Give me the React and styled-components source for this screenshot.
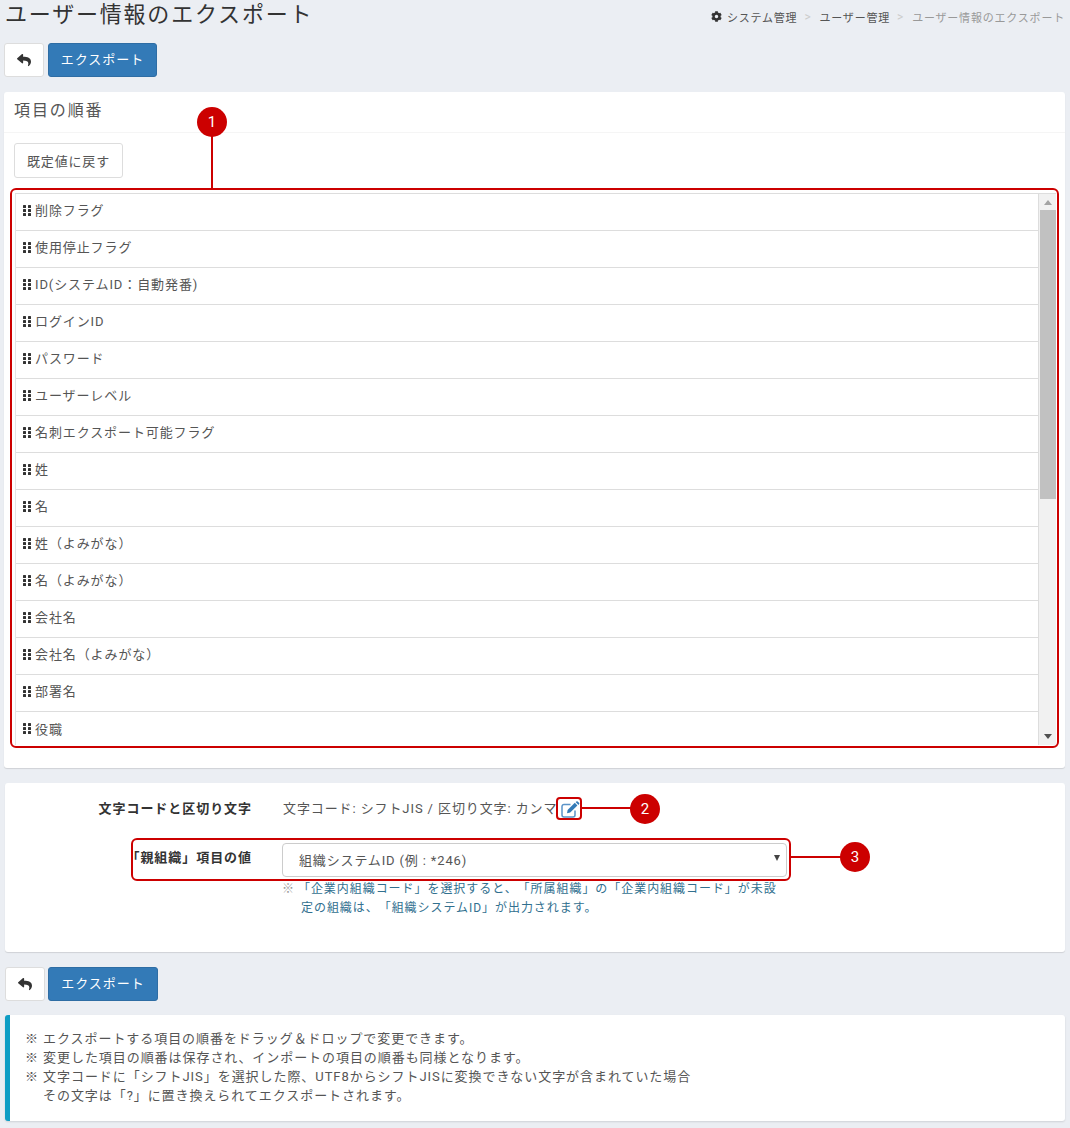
import React from "react";
import styled, { createGlobalStyle } from "styled-components";
import { FaCog, FaReply } from "react-icons/fa";

const Global = createGlobalStyle`
  html, body { margin: 0; padding: 0; background: #ebeef3; }
  body {
    font-family: Roboto, "Noto Sans CJK JP", sans-serif;
    font-size: 13px;
    color: #555;
    height: 1128px;
    overflow: hidden;
    text-spacing-trim: space-all;
  }
  * { box-sizing: border-box; }
`;

const Page = styled.div`
  padding: 0 5px 0 4px;
  width: 1070px;
`;
const TitleBar = styled.header`
  display: flex;
  justify-content: space-between;
  align-items: flex-start;
  height: 43px;
  padding-left: 1px;
`;
const Title = styled.h1`
  margin: 0;
  font-size: 22px;
  line-height: 29px;
  font-weight: 400;
  letter-spacing: 1.8px;
  color: #333;
`;
const Crumbs = styled.nav`
  display: flex;
  align-items: center;
  height: 17px;
  margin-top: 8px;
  font-size: 11px;
  letter-spacing: 0.8px;
  color: #555;
`;
const CrumbIcon = styled(FaCog)`
  font-size: 11px;
  margin-right: 5px;
  color: #333;
`;
const Sep = styled.span`
  color: #ccc;
  font-size: 12px;
  margin: 0 8px 0 7px;
`;
const CrumbCurrent = styled.span`
  color: #999;
`;
const Actions = styled.div`
  display: flex;
  gap: ${(p) => p.$gap || 4}px;
  height: 34px;
  margin-left: ${(p) => p.$left || 0}px;
`;
const BackButton = styled.button`
  width: 40px;
  height: 34px;
  padding: 0;
  background: #fff;
  border: 1px solid #ddd;
  border-radius: 3px;
  color: #333;
  font-size: 14px;
  display: flex;
  align-items: center;
  justify-content: center;
`;
const PrimaryButton = styled.button`
  width: ${(p) => p.$width || 109}px;
  height: 34px;
  padding: 0 0 4px;
  background: #337ab7;
  border: 1px solid #2e6da4;
  border-radius: 3px;
  color: #fff;
  font-family: inherit;
  font-size: 13px;
  letter-spacing: 0.95px;
`;
const Panel = styled.section`
  background: #fff;
  border-radius: 3px;
  box-shadow: 0 1px 1px rgba(0, 0, 0, 0.12);
  margin-top: ${(p) => p.$top}px;
  margin-left: ${(p) => p.$left || 0}px;
`;
const PanelHead = styled.div`
  height: 41px;
  padding: 8px 10px 0;
  font-size: 16px;
  line-height: 21px;
  letter-spacing: 1.9px;
  color: #555;
  border-bottom: 1px solid #f5f5f5;
`;
const PanelBody = styled.div`
  padding: 10px 6px 20px 7px;
  height: 635px;
`;
const ResetButton = styled.button`
  display: block;
  margin-left: 3px;
  width: 109px;
  height: 35px;
  padding: 0;
  background: #fff;
  border: 1px solid #ddd;
  border-radius: 3px;
  color: #555;
  font-family: inherit;
  font-size: 13px;
  letter-spacing: 0.85px;
`;
const ListFrame = styled.div`
  position: relative;
  margin: 15px 0 0 4px;
  width: 1041px;
  height: 552px;
  display: flex;
  border-top: 1px solid #ddd;
`;
const Rows = styled.ul`
  flex: 1;
  list-style: none;
  margin: 0;
  padding: 0;
  overflow: hidden;
  border-left: 1px solid #e4e4e4;
  border-right: 1px solid #ddd;
`;
const Row = styled.li`
  display: flex;
  align-items: center;
  height: 37px;
  padding: 0 0 5px 7px;
  gap: 4px;
  font-size: 13px;
  letter-spacing: 0.9px;
  color: #555;
  border-bottom: 1px solid #ddd;
  &:last-child { border-bottom: 0; }
`;
const GripIcon = styled.svg`
  margin-top: 1px;
  flex: none;
`;
const Scrollbar = styled.div`
  width: 17px;
  background: #f1f1f1;
  display: flex;
  flex-direction: column;
  align-items: stretch;
`;
const ScrollArrow = styled.div`
  height: 17px;
  display: flex;
  align-items: center;
  justify-content: center;
`;
const ScrollTrack = styled.div`
  flex: 1;
  padding: 0 0 0 1px;
  margin-top: -1px;
`;
const ScrollThumb = styled.div`
  height: 289px;
  background: #c1c1c1;
`;
const Mark = styled.div`
  position: absolute;
  border: 2px solid #cc0000;
  border-radius: ${(p) => p.$radius || 6}px;
  pointer-events: none;
`;
const ListMark = styled(Mark)`
  left: -5px;
  top: -6px;
  width: 1049px;
  height: 560px;
`;
const Badge = styled.div`
  position: absolute;
  width: 30px;
  height: 30px;
  border-radius: 50%;
  background: #cc0000;
  color: #fff;
  font-size: 15px;
  font-family: Roboto, sans-serif;
  display: flex;
  align-items: center;
  justify-content: center;
`;
const Badge1 = styled(Badge)`
  left: 182px;
  top: -87px;
`;
const VLine = styled.div`
  position: absolute;
  left: 196px;
  top: -60px;
  width: 2px;
  height: 54px;
  background: #cc0000;
`;
const HLine = styled.div`
  position: absolute;
  height: 2px;
  background: #cc0000;
  width: ${(p) => p.$width}px;
  left: ${(p) => p.$left}px;
  top: ${(p) => p.$top}px;
`;
const FormBody = styled.div`
  height: 169px;
  padding-top: 16px;
`;
const FormRow = styled.div`
  position: relative;
  display: grid;
  grid-template-columns: 247px 505px;
  column-gap: 30px;
  margin-top: ${(p) => p.$top || 0}px;
`;
const Label = styled.label`
  text-align: right;
  font-size: 13px;
  font-weight: 700;
  line-height: 20px;
  padding-top: ${(p) => p.$pad || 0}px;
  letter-spacing: 0.95px;
  color: #333;
`;
const Value = styled.div`
  display: flex;
  align-items: center;
  padding-left: 1px;
  font-size: 13px;
  line-height: 20px;
  letter-spacing: 0.9px;
  color: #555;
  white-space: nowrap;
`;
const EditIcon = styled.svg`
  margin-left: 4px;
  flex: none;
`;
const IconMark = styled(Mark)`
  left: 551px;
  top: -2px;
  width: 26px;
  height: 23px;
  border-radius: 4px;
`;
const Badge2 = styled(Badge)`
  left: 625px;
  top: -5px;
`;
const SelectWrap = styled.div`
  position: relative;
`;
const Select = styled.select`
  appearance: none;
  display: block;
  width: 505px;
  height: 34px;
  padding: 1px 0 0 16px;
  background: #fff;
  border: 1px solid #ccc;
  border-radius: 4px;
  font-family: inherit;
  font-size: 13px;
  letter-spacing: 0.85px;
  color: #555;
`;
const Caret = styled.svg`
  position: absolute;
  right: 7px;
  top: 12px;
`;
const SelectMark = styled(Mark)`
  left: 126px;
  top: -5px;
  width: 660px;
  height: 43px;
`;
const Badge3 = styled(Badge)`
  left: 835px;
  top: -1px;
`;
const Hint = styled.p`
  grid-column: 2;
  margin: 3px 0 0;
  width: 505px;
  padding-left: 19px;
  text-indent: -19px;
  font-size: 12px;
  line-height: 19px;
  letter-spacing: 0.95px;
  color: #31708f;
`;
const HintMark = styled.span`
  color: #999;
  margin-right: 3px;
`;
const Info = styled.aside`
  margin: 14px 0 0 1px;
  height: 106px;
  padding: 14px 20px 0 15px;
  background: #fff;
  border-left: 5px solid #0e9dc4;
  border-radius: 3px;
  box-shadow: 0 1px 2px rgba(0, 0, 0, 0.12);
  font-size: 13px;
  line-height: 19px;
  letter-spacing: 0.94px;
  color: #555;
`;
const InfoLine = styled.div`
  padding-left: ${(p) => (p.$indent ? 18 : 0)}px;
`;
const Spacer = styled.div`
  height: 15px;
`;

function Grip() {
  return (
    <GripIcon width="8" height="11" viewBox="0 0 8 11" fill="#333">
      {[0, 4, 8].map((y) => (
        <g key={y}>
          <rect x="0" y={y} width="3" height="3" rx="0.5" />
          <rect x="5" y={y} width="3" height="3" rx="0.5" />
        </g>
      ))}
    </GripIcon>
  );
}

function PencilSquare() {
  return (
    <EditIcon width="19" height="17" viewBox="0 0 19 17">
      <path
        d="M9.5 3.5H3a2 2 0 0 0-2 2v8.5a2 2 0 0 0 2 2h9a2 2 0 0 0 2-2V9.5"
        fill="none"
        stroke="#5a93c8"
        strokeWidth="1.5"
      />
      <path d="M6 12.2l.6-3.2L13.8 1.8l2.6 2.6L9.2 11.6z" fill="#337ab7" />
      <path d="M14.6 1l.8-.6a1 1 0 0 1 1.3.1l1.3 1.3a1 1 0 0 1 .1 1.3l-.7.8z" fill="#337ab7" />
    </EditIcon>
  );
}

const items = [
  "削除フラグ", "使用停止フラグ", "ID(システムID：自動発番)", "ログインID", "パスワード",
  "ユーザーレベル", "名刺エクスポート可能フラグ", "姓", "名", "姓（よみがな）",
  "名（よみがな）", "会社名", "会社名（よみがな）", "部署名", "役職",
];

function ActionBar({ left, width, gap }) {
  return (
    <Actions $left={left} $gap={gap}>
      <BackButton aria-label="戻る"><FaReply /></BackButton>
      <PrimaryButton $width={width}>エクスポート</PrimaryButton>
    </Actions>
  );
}

export default function App() {
  return (
    <Page>
      <Global />
      <TitleBar>
        <Title>ユーザー情報のエクスポート</Title>
        <Crumbs>
          <CrumbIcon />
          システム管理<Sep>&gt;</Sep>ユーザー管理<Sep>&gt;</Sep>
          <CrumbCurrent>ユーザー情報のエクスポート</CrumbCurrent>
        </Crumbs>
      </TitleBar>
      <ActionBar />
      <Panel $top={15}>
        <PanelHead>項目の順番</PanelHead>
        <PanelBody>
          <ResetButton>既定値に戻す</ResetButton>
          <ListFrame>
            <Rows>
              {items.map((t) => (
                <Row key={t}><Grip />{t}</Row>
              ))}
            </Rows>
            <Scrollbar>
              <ScrollArrow>
                <svg width="8" height="5" viewBox="0 0 8 5" fill="#a3a3a3"><path d="M4 0l4 5H0z" /></svg>
              </ScrollArrow>
              <ScrollTrack><ScrollThumb /></ScrollTrack>
              <ScrollArrow>
                <svg width="8" height="5" viewBox="0 0 8 5" fill="#505050"><path d="M0 0h8L4 5z" /></svg>
              </ScrollArrow>
            </Scrollbar>
            <ListMark />
            <VLine />
            <Badge1>1</Badge1>
          </ListFrame>
        </PanelBody>
      </Panel>
      <Panel $top={15} $left={1}>
        <FormBody>
          <FormRow>
            <Label>文字コードと区切り文字</Label>
            <Value>
              文字コード: シフトJIS / 区切り文字: カンマ
              <PencilSquare />
            </Value>
            <IconMark />
            <HLine $left={576} $top={8} $width={50} />
            <Badge2>2</Badge2>
          </FormRow>
          <FormRow $top={24}>
            <Label $pad={5}>「親組織」項目の値</Label>
            <SelectWrap>
              <Select defaultValue="id">
                <option value="id">組織システムID (例 : *246)</option>
              </Select>
              <Caret width="6" height="6" viewBox="0 0 6 6" fill="#444"><path d="M0 0h6L3 6z" /></Caret>
            </SelectWrap>
            <SelectMark />
            <HLine $left={786} $top={13} $width={50} />
            <Badge3>3</Badge3>
            <Hint>
              <HintMark>※</HintMark>「企業内組織コード」を選択すると、「所属組織」の「企業内組織コード」が未設定の組織は、「組織システムID」が出力されます。
            </Hint>
          </FormRow>
        </FormBody>
      </Panel>
      <Spacer />
      <ActionBar left={1} width={110} gap={3} />
      <Info>
        <InfoLine>※ エクスポートする項目の順番をドラッグ＆ドロップで変更できます。</InfoLine>
        <InfoLine>※ 変更した項目の順番は保存され、インポートの項目の順番も同様となります。</InfoLine>
        <InfoLine>※ 文字コードに「シフトJIS」を選択した際、UTF8からシフトJISに変換できない文字が含まれていた場合</InfoLine>
        <InfoLine $indent>その文字は「?」に置き換えられてエクスポートされます。</InfoLine>
      </Info>
    </Page>
  );
}
